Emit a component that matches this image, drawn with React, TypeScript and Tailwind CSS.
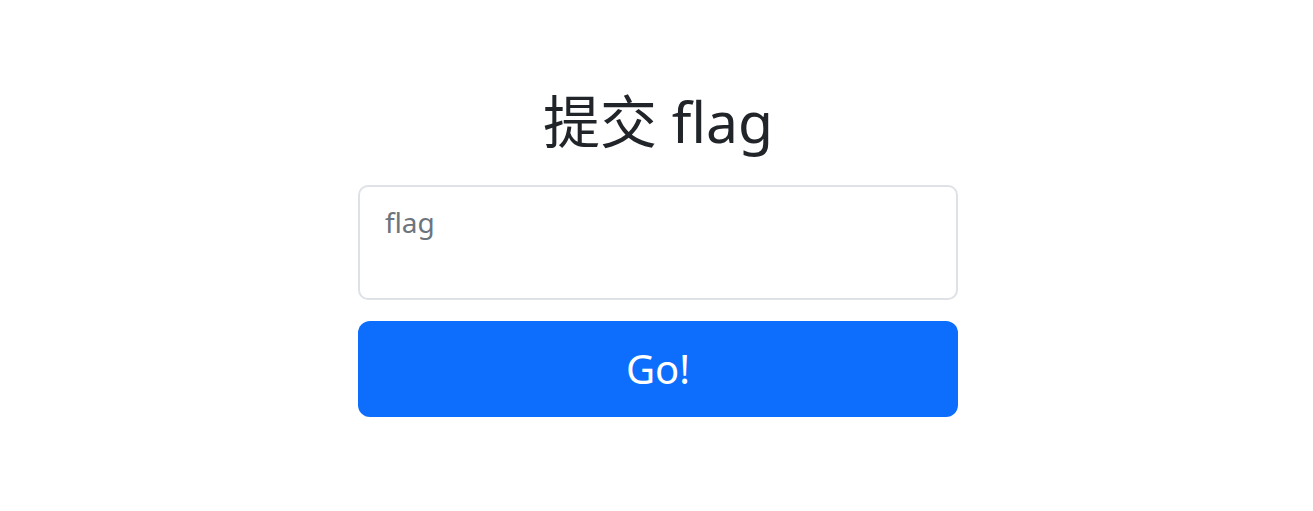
export default function App() {
  return (
    <div className="min-h-screen bg-white pl-[3px] font-['Noto_Sans','Noto_Sans_CJK_SC',sans-serif] text-[#212529]">
      <div className="mx-auto flex w-[600px] flex-col pt-[87px]">
        <h1 className="text-center text-[57px] leading-[1.2] font-normal">提交 flag</h1>
        <form className="mt-[30px] flex flex-col gap-[21px]">
          <textarea
            placeholder="flag"
            className="h-[115px] w-full resize-none rounded-[10px] border-2 border-[#dee2e6] px-[25px] py-[14px] text-[28px] leading-[1.5] outline-none placeholder:text-[#6c757d]"
          />
          <button
            type="button"
            className="h-[96px] w-full rounded-[12px] bg-[#0d6efd] text-[40px] text-white"
          >
            Go!
          </button>
        </form>
      </div>
    </div>
  );
}
